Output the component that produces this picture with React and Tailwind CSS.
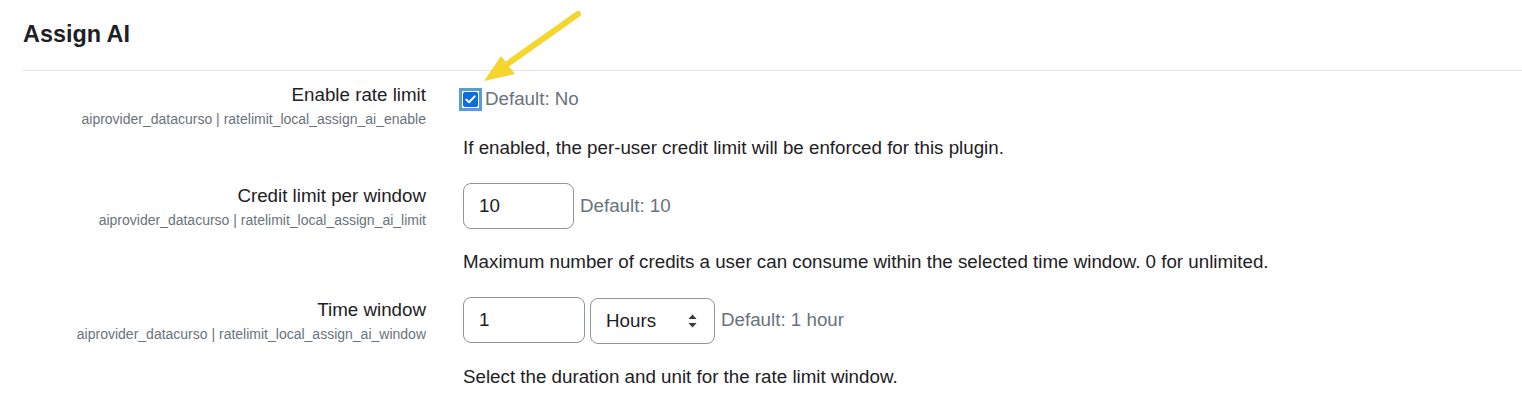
import React from "react";

const Field = ({ children, className = "" }) => (
  <div
    className={`h-[46px] border border-[#8f959e] rounded-[8px] flex items-center px-[15px] text-[18.75px] text-[#1d2125] bg-white ${className}`}
  >
    {children}
  </div>
);

function Row({ label, name, children, className = "" }) {
  return (
    <div className={`flex ${className}`}>
      <div className="w-[403px] shrink-0 text-right">
        <div className="text-[18.75px] leading-[28px]">{label}</div>
        <div className="text-[14px] leading-[20px] text-[#6a737b]">{name}</div>
      </div>
      <div className="ml-[37px] flex-1">{children}</div>
    </div>
  );
}

export default function App() {
  return (
    <div className="relative w-[1522px] h-[402px] overflow-hidden bg-white text-[#1d2125] font-['Liberation_Sans',Arial,sans-serif]">
      <div className="pl-[23px]">
        <h2 className="pt-[20px] text-[23.4px] leading-[28px] font-bold">Assign AI</h2>
        <hr className="mt-[22px] border-0 border-t border-[#dee2e6]" />

        <Row
          className="mt-[10px]"
          label="Enable rate limit"
          name="aiprovider_datacurso | ratelimit_local_assign_ai_enable"
        >
          <div className="mt-[6px] h-[24px] flex items-center ml-[-4px]">
            <div className="w-[23px] h-[23px] bg-[#5b9bd8] flex items-center justify-center">
              <div className="w-[17px] h-[17px] bg-white flex items-center justify-center">
                <div className="w-[15px] h-[15px] bg-[#0f6cde] rounded-[2px] flex items-center justify-center">
                  <svg width="11" height="9" viewBox="0 0 11 9" fill="none">
                    <path d="M1.3 4.6 L4.1 7.3 L9.7 1.4" stroke="white" strokeWidth="2" strokeLinecap="round" strokeLinejoin="round" />
                  </svg>
                </div>
              </div>
            </div>
            <span className="ml-[3px] text-[18.75px] text-[#6a737b] leading-[28px]">Default: No</span>
          </div>
          <p className="mt-[23px] text-[18.75px] leading-[28px]">
            If enabled, the per-user credit limit will be enforced for this plugin.
          </p>
        </Row>

        <Row
          className="mt-[20px]"
          label="Credit limit per window"
          name="aiprovider_datacurso | ratelimit_local_assign_ai_limit"
        >
          <div className="mt-[1px] flex items-center">
            <Field className="w-[111px]">10</Field>
            <span className="ml-[6px] text-[18.75px] text-[#6a737b]">Default: 10</span>
          </div>
          <p className="mt-[19px] text-[18.75px] leading-[28px]">
            Maximum number of credits a user can consume within the selected time window. 0 for unlimited.
          </p>
        </Row>

        <Row
          className="mt-[20px]"
          label="Time window"
          name="aiprovider_datacurso | ratelimit_local_assign_ai_window"
        >
          <div className="mt-[1px] flex items-start">
            <Field className="w-[122px]">1</Field>
            <Field className="w-[125px] ml-[5px] mt-[1px] justify-between pr-[17px]">
              <span>Hours</span>
              <svg width="9" height="14" viewBox="0 0 9 14">
                <path d="M4.5 0.5 L8.5 5 L0.5 5 Z" fill="#343a40" />
                <path d="M4.5 13.5 L8.5 9 L0.5 9 Z" fill="#343a40" />
              </svg>
            </Field>
            <span className="ml-[6px] h-[46px] flex items-center text-[18.75px] text-[#6a737b]">Default: 1 hour</span>
          </div>
          <p className="mt-[19px] text-[18.75px] leading-[28px]">
            Select the duration and unit for the rate limit window.
          </p>
        </Row>
      </div>

      {/* annotation arrow */}
      <svg className="absolute left-0 top-0 pointer-events-none" width="1522" height="402">
        <line x1="578" y1="14" x2="503" y2="67" stroke="#f6d52f" strokeWidth="6" strokeLinecap="round" />
        <polygon points="484,81 501,56 515,74" fill="#f6d52f" />
      </svg>
    </div>
  );
}
